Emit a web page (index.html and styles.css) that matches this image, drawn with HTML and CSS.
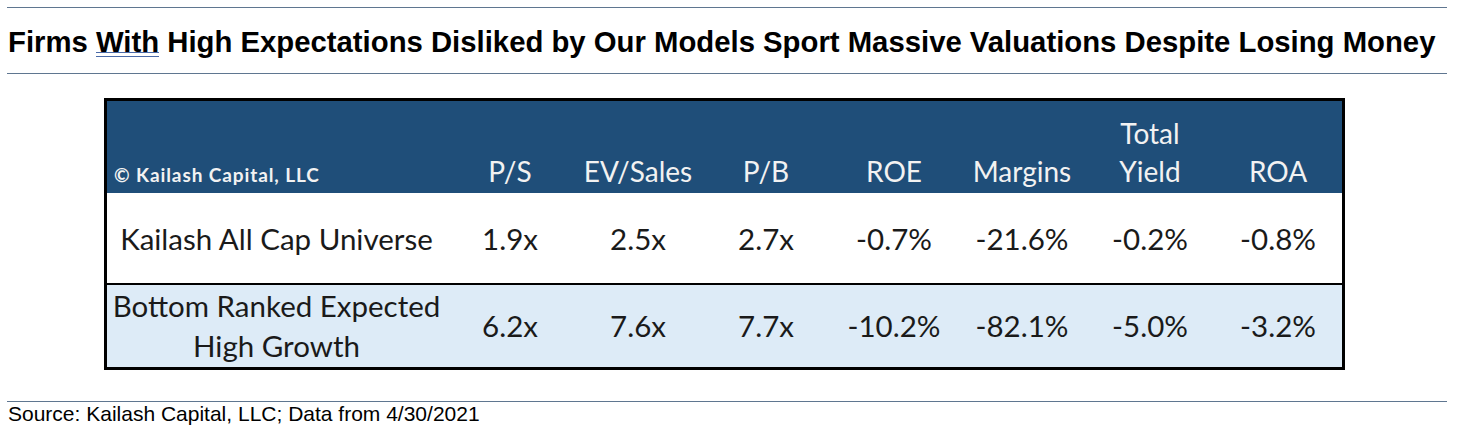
FILE: index.html
```html
<!DOCTYPE html>
<html lang="en">
<head>
<meta charset="utf-8">
<title>Firms With High Expectations</title>
<link rel="stylesheet" href="styles.css">
</head>
<body>
<div class="page">
  <div class="rule"></div>
  <h1 class="title">Firms <span class="ul">With</span> High Expectations Disliked by Our Models Sport Massive Valuations Despite Losing Money</h1>
  <div class="rule"></div>
  <div class="table-wrap">
    <table class="data">
      <colgroup>
        <col class="c-label">
        <col class="c-num"><col class="c-num"><col class="c-num"><col class="c-num"><col class="c-num"><col class="c-num"><col class="c-num">
      </colgroup>
      <thead>
        <tr class="head">
          <th class="copy">© Kailash Capital, LLC</th>
          <th>P/S</th>
          <th>EV/Sales</th>
          <th>P/B</th>
          <th>ROE</th>
          <th>Margins</th>
          <th>Total<br>Yield</th>
          <th>ROA</th>
        </tr>
      </thead>
      <tbody>
        <tr class="r1">
          <td class="label">Kailash All Cap Universe</td>
          <td>1.9x</td><td>2.5x</td><td>2.7x</td><td>-0.7%</td><td>-21.6%</td><td>-0.2%</td><td>-0.8%</td>
        </tr>
        <tr class="r2">
          <td class="label">Bottom Ranked Expected<br>High Growth</td>
          <td>6.2x</td><td>7.6x</td><td>7.7x</td><td>-10.2%</td><td>-82.1%</td><td>-5.0%</td><td>-3.2%</td>
        </tr>
      </tbody>
    </table>
  </div>
  <div class="rule"></div>
  <p class="source">Source: Kailash Capital, LLC; Data from 4/30/2021</p>
</div>
</body>
</html>
```

FILE: styles.css
```css
html, body {
  margin: 0;
  padding: 0;
  background: #ffffff;
}

.page {
  width: 1440px;
  margin-left: 7px;
  padding-top: 7px;
  font-family: "Liberation Sans", Arial, sans-serif;
  color: #000;
}

.rule {
  height: 1px;
  background: #5f7690;
}

.title {
  margin: 0;
  height: 63px;
  padding: 2px 0 0 1px;
  line-height: 63px;
  font-size: 29.3px;
  font-weight: 700;
  white-space: nowrap;
}

.ul {
  background:
    linear-gradient(#4a6aa8, #4a6aa8) 0 calc(100% - 1px) / 100% 1px no-repeat,
    linear-gradient(#4a6aa8, #4a6aa8) 0 calc(100% - 5px) / 100% 1px no-repeat;
}

.table-wrap {
  padding: 24px 0 31px 97px;
}

.data {
  width: 1241px;
  table-layout: fixed;
  border-collapse: separate;
  border-spacing: 0;
  border: 3px solid #000;
  font-family: Lato, "Open Sans", sans-serif;
  font-size: 29.5px;
  color: #1a1a1a;
}

.c-label { width: 339px; }
.c-num { width: 128px; }

.data th,
.data td {
  padding: 0;
  text-align: center;
  font-weight: 400;
}

.head th {
  background: #1f4e79;
  color: #f2f2f2;
  height: 92px;
  vertical-align: bottom;
  padding-bottom: 3px;
  font-size: 28px;
  line-height: 38px;
  box-sizing: border-box;
}

.head th.copy {
  text-align: left;
  padding-left: 7px;
  font-size: 19px;
  font-weight: 700;
  letter-spacing: 0.9px;
  line-height: 30px;
}

.r1 td {
  background: #ffffff;
  height: 90px;
  vertical-align: middle;
}

.r2 td {
  background: #ddebf7;
  height: 82px;
  border-top: 2px solid #000;
  vertical-align: middle;
  line-height: 40px;
}

.source {
  margin: 0 0 0 1px;
  font-size: 21px;
  line-height: 24px;
}
```
